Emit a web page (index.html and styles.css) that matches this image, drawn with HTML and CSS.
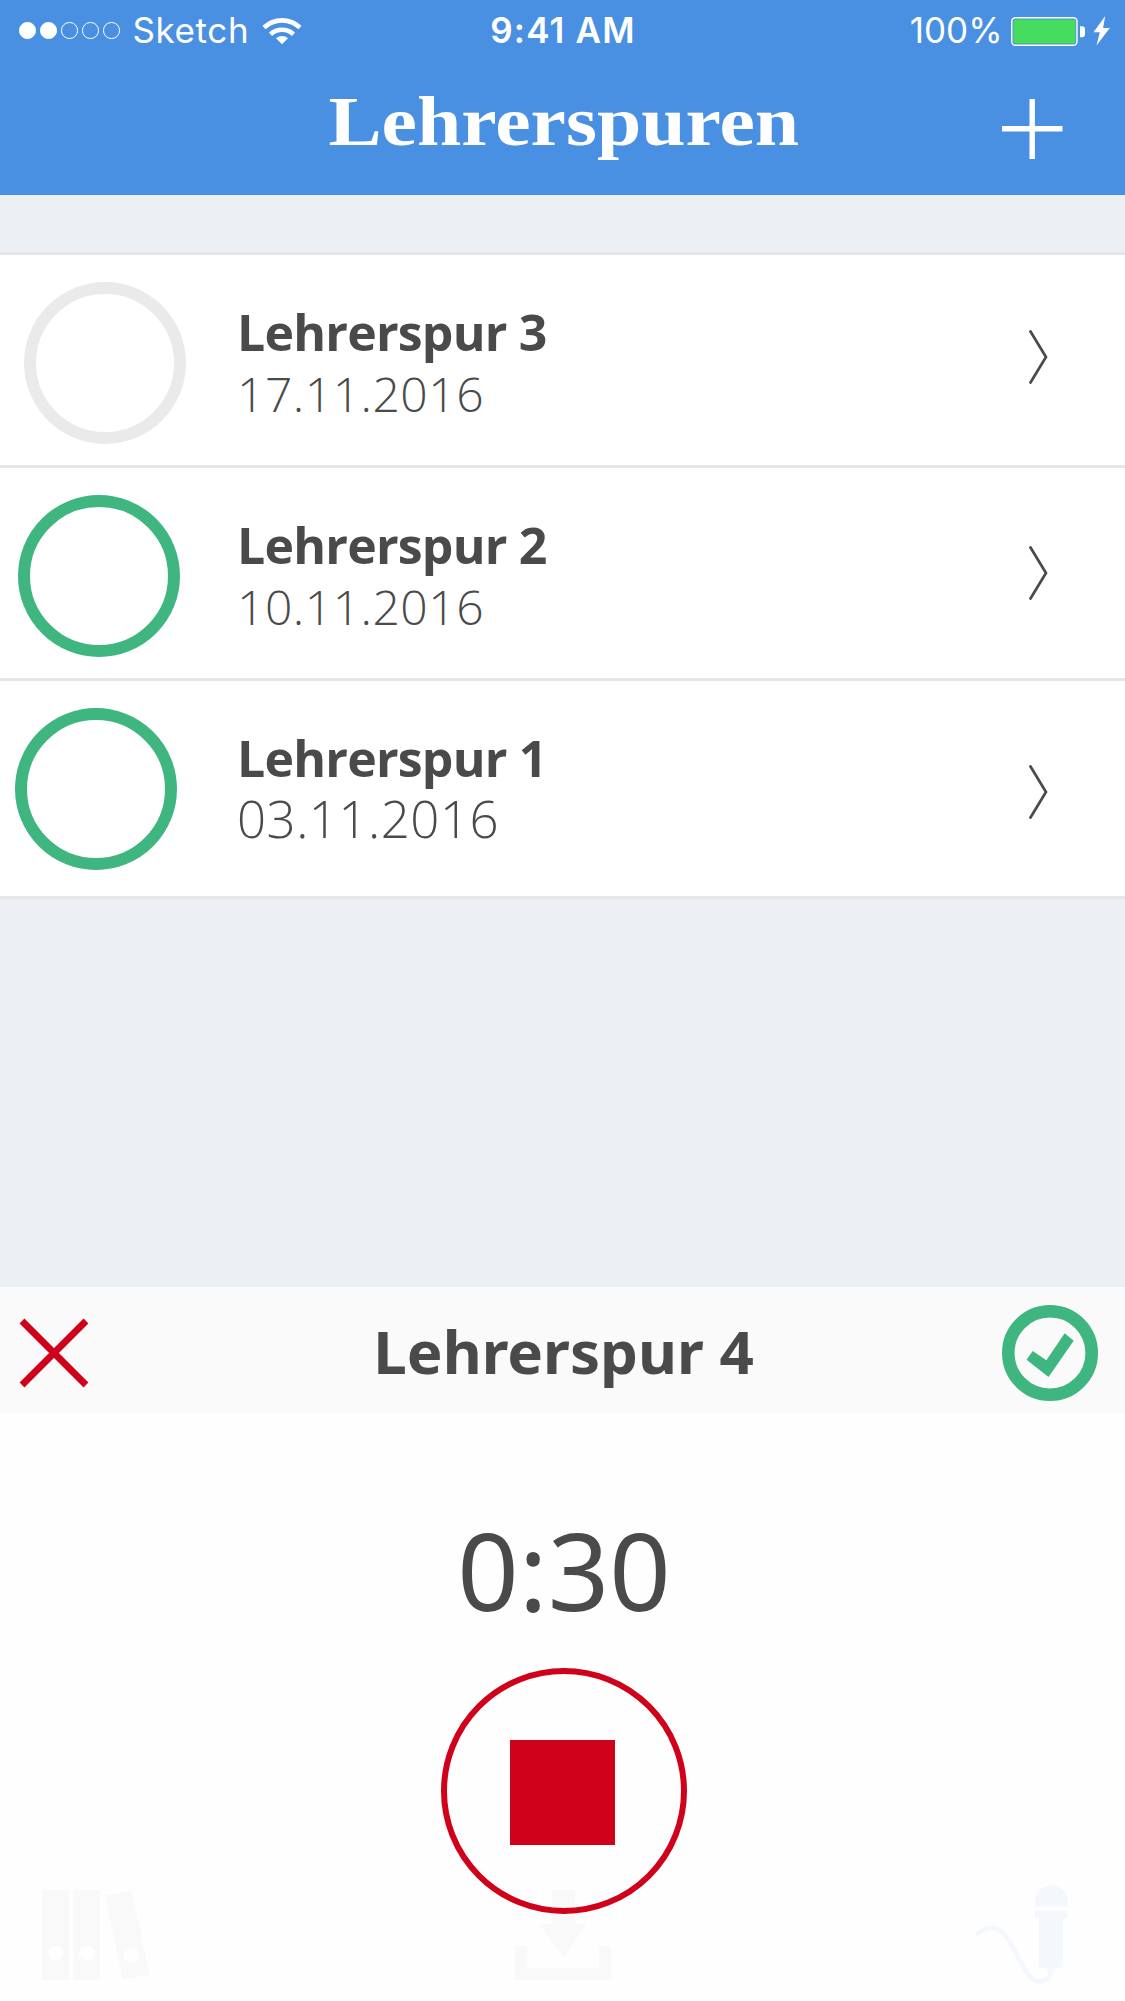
FILE: index.html
```html
<!DOCTYPE html>
<html lang="de">
<head>
<meta charset="utf-8">
<title>Lehrerspuren</title>
<link rel="stylesheet" href="styles.css">
</head>
<body>
<main class="app">
  <header class="header">
    <div class="status">
      <div class="status-left">
        <span class="signal"><i class="dot full"></i><i class="dot full"></i><i class="dot"></i><i class="dot"></i><i class="dot"></i></span>
        <span class="carrier">Sketch</span>
        <svg class="wifi" width="40" height="28" viewBox="0 0 40 28"><g fill="none" stroke="#fff" stroke-width="4.600"><path d="M2 10.500A26.200 26.200 0 0 1 38 10.500"/><path d="M8.500 17.200A17 17 0 0 1 31.500 17.200"/></g><path d="M20 27.300L14 21.300A9 9 0 0 1 26 21.300Z" fill="#fff"/></svg>
      </div>
      <span class="time">9:41 AM</span>
      <div class="status-right">
        <span class="percent">100%</span>
        <svg width="100" height="32" viewBox="0 0 100 32"><rect x=".8" y="2.800" width="65.200" height="27.400" rx="3.500" fill="none" stroke="#fff" stroke-width="1.400"/><rect x="2.500" y="4.600" width="62" height="23.800" rx="2" fill="#46dd5e"/><path d="M69 11.300h2q3 0 3 3v5q0 3-3 3h-2z" fill="#fff"/><path d="M94.200 1L82.500 17.300h6.300L85.500 30.600 98.800 13h-6.700z" fill="#fff"/></svg>
      </div>
    </div>
    <div class="nav">
      <h1 class="title">Lehrerspuren</h1>
      <svg class="add" width="61" height="60" viewBox="0 0 61 60"><path d="M0 29.700H60.500M30.200 0V60" stroke="#fff" stroke-width="5.400"/></svg>
    </div>
  </header>

  <section class="list">
    <article class="row">
      <div class="ring idle"></div>
      <div class="info"><h2 class="name">Lehrerspur 3</h2><p class="date">17.11.2016</p></div>
      <svg class="chevron" width="20" height="54" viewBox="0 0 20 54"><path d="M1.500 1.500L17 27 1.500 52.500" /></svg>
    </article>
    <article class="row second">
      <div class="ring"></div>
      <div class="info"><h2 class="name">Lehrerspur 2</h2><p class="date">10.11.2016</p></div>
      <svg class="chevron" width="20" height="54" viewBox="0 0 20 54"><path d="M1.500 1.500L17 27 1.500 52.500" /></svg>
    </article>
    <article class="row third">
      <div class="ring"></div>
      <div class="info"><h2 class="name">Lehrerspur 1</h2><p class="date large">03.11.2016</p></div>
      <svg class="chevron" width="20" height="54" viewBox="0 0 20 54"><path d="M1.500 1.500L17 27 1.500 52.500" /></svg>
    </article>
  </section>

  <section class="recorder">
    <div class="recorder-bar">
      <svg width="70" height="70" viewBox="0 0 70 70"><path d="M3 3L67 67M67 3L3 67" stroke="#d0021b" stroke-width="6.800"/></svg>
      <h2 class="recorder-title">Lehrerspur 4</h2>
      <svg width="96" height="96" viewBox="0 0 96 96"><circle cx="48" cy="48" r="41.700" fill="none" stroke="#3fb67f" stroke-width="12.600"/><path d="M24.600 54.700L30.700 46 44.400 55.300 62.700 28.300 71.700 35.700 46.500 72Z" fill="#3fb67f"/></svg>
    </div>
    <div class="recorder-body">
      <div class="timer">0:30</div>
      <div class="stop"><div class="stop-square"></div></div>
      <nav class="tabs">
        <svg width="108" height="90" viewBox="0 0 108 90"><path fill="#f9f9f9" d="M0 0h27v90H0zM31.500 0h26.800v90H31.500zM63 5.500L90 .7 107.300 85 80.500 89.300z"/><g fill="#fefefe"><circle cx="13.800" cy="63" r="7.700"/><circle cx="45" cy="63" r="7.700"/><circle cx="89.300" cy="64.800" r="7.700"/></g></svg>
        <svg class="download" width="97" height="90" viewBox="0 0 97 90"><path fill="#f9f9f9" d="M36.500 0h23.700v34h11.500L48.500 67 24.500 34h12zM0 56h12.500v22h71.300V56h12.400v34H0z"/></svg>
        <svg class="mic" width="94" height="101" viewBox="0 0 94 101"><g fill="#f4f8fd"><path d="M60 22V16.500a16.200 16.200 0 0 1 32.500 0V22zM60 25.500h32.500V33H88v49.700h-7.500V86h-9v-3.300H64V33h-4z"/></g><path d="M1.500 50C9 42 23 38 33 54C44 70 51 97 65 96.500C73 96 76 92 76 84" fill="none" stroke="#f4f8fd" stroke-width="4.500"/></svg>
      </nav>
    </div>
  </section>
</main>
</body>
</html>
```
FILE: styles.css
```css
* { box-sizing: border-box; }
body { margin: 0; background: #ecf0f4; color: #4a4a4a; }
h1, h2, p { margin: 0; }
svg { display: block; flex: none; }

.app {
  width: 1125px;
  height: 2001px;
  display: flex;
  flex-direction: column;
  overflow: hidden;
}

.header { height: 195px; background: #4990e2; color: #fff; }
.status {
  height: 60px;
  display: grid;
  grid-template-columns: 1fr auto 1fr;
  align-items: center;
  padding: 1px 14px 0 19px;
  font: 400 35px/59px Inter, sans-serif;
}
.status-left, .status-right { display: flex; align-items: center; }
.status-right { justify-content: flex-end; gap: 8.500px; }
.signal { display: flex; gap: 4.500px; }
.dot { width: 16.500px; height: 16.500px; border: 1.500px solid #fff; border-radius: 50%; }
.dot.full { background: #fff; }
.carrier { margin-left: 13px; letter-spacing: .6px; }
.wifi { margin-left: 13px; }
.time { margin-right: 4px; font-weight: 600; letter-spacing: 1.200px; }

.nav {
  display: grid;
  grid-template-columns: 1fr auto 1fr;
  padding: 0 62px;
}
.title {
  grid-column: 2;
  margin-left: 3px;
  font: 700 70px/124px "Liberation Serif", serif;
  transform: scaleX(1.138);
}
.add { justify-self: end; margin-top: 39px; }

.list { margin-top: 57px; border-top: 3px solid #e6e6e5; background: #fff; }
.row {
  height: 213px;
  display: flex;
  align-items: flex-start;
  padding: 27px 76px 0 24px;
  border-bottom: 3px solid #e6e6e6;
}
.row.second { padding-left: 18px; }
.row.third { height: 218px; padding-left: 15px; }
.ring { width: 162px; height: 162px; border: 12px solid #3fb67f; border-radius: 50%; }
.ring.idle { border-color: #eaeaea; }
.info { margin-left: 51px; }
.second .info { margin-left: 57px; }
.third .info { margin-left: 60px; }
.name { margin-top: 20px; font: 700 50px/61px "Open Sans", sans-serif; letter-spacing: -.8px; }
.date { font: 300 48px/61px "Open Sans", sans-serif; letter-spacing: .5px; }
.date.large { font-size: 51px; line-height: 59px; }
.chevron { margin: 48px 0 0 auto; fill: none; stroke: #4a4a4a; stroke-width: 2.700; stroke-linecap: round; }
.second .chevron { margin-top: 51px; }
.third .chevron { margin-top: 57px; }

.recorder { height: 714px; margin-top: auto; }
.recorder-bar {
  height: 126px;
  display: grid;
  grid-template-columns: 1fr auto 1fr;
  align-items: center;
  padding: 6px 27px 0 19px;
  background: #fafafa;
}
.recorder-bar svg:last-child { justify-self: end; }
.recorder-title { margin: 0 0 4px 10px; font: 700 60px/80px "Noto Sans", sans-serif; }
.recorder-body {
  position: relative;
  height: 588px;
  display: flex;
  flex-direction: column;
  align-items: center;
  background: #fefefe;
}
.timer { margin: 81px 0 0 3px; font: 400 107.500px/150px "Noto Sans", sans-serif; }
.stop {
  z-index: 1;
  width: 246px;
  height: 246px;
  margin: 24px 0 0 3px;
  padding: 66px 0 0 63px;
  border: 6px solid #d0021b;
  border-radius: 50%;
}
.stop-square { width: 105px; height: 105px; background: #d0021b; }
.tabs {
  position: absolute;
  inset: auto 56px 21px 42px;
  display: flex;
  justify-content: space-between;
  align-items: flex-end;
}
.download { margin-left: 2px; }
.mic { margin-bottom: -6px; }
```
